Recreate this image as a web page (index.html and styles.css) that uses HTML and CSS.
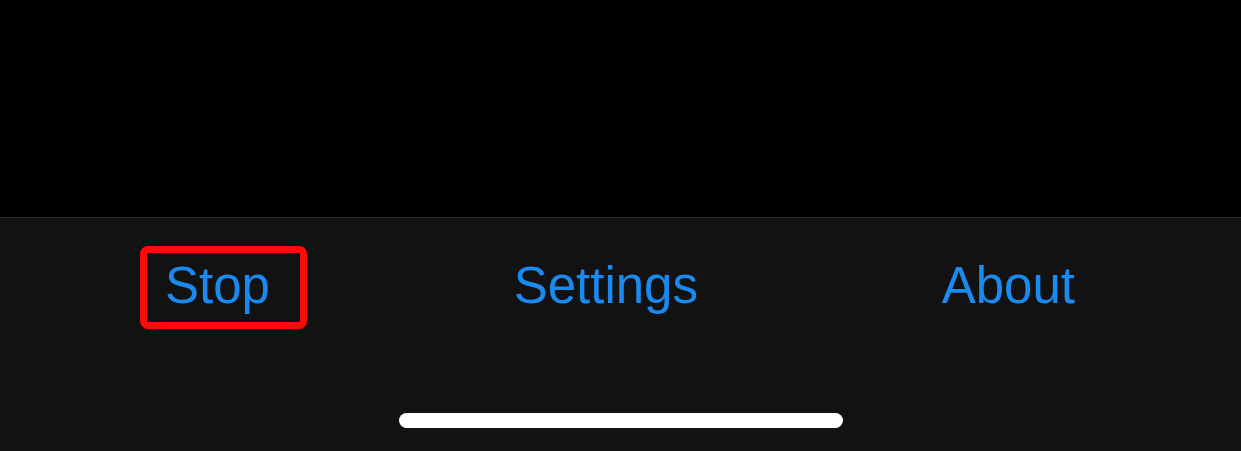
FILE: index.html
```html
<!DOCTYPE html>
<html>
<head>
<meta charset="utf-8">
<link rel="stylesheet" href="styles.css">
</head>
<body>
<div class="screen">
  <div class="content"></div>
  <div class="tabbar">
    <nav class="tabs">
      <span class="tab tab-highlighted">Stop<span class="highlight"></span></span>
      <span class="tab">Settings</span>
      <span class="tab">About</span>
    </nav>
    <div class="home-indicator"></div>
  </div>
</div>
</body>
</html>
```
FILE: styles.css
```css
html, body {
  margin: 0;
  padding: 0;
  background: #121212;
}
.screen {
  width: 1241px;
  height: 451px;
  display: flex;
  flex-direction: column;
  overflow: hidden;
}
.content {
  height: 217px;
  background: #000;
  border-bottom: 1px solid #2a2a2a;
  flex: none;
}
.tabbar {
  flex: 1;
  background: #121212;
  display: flex;
  flex-direction: column;
  align-items: center;
}
.tabs {
  align-self: stretch;
  display: flex;
  justify-content: space-between;
  padding: 38px 166px 0 165px;
}
.tab {
  font-family: "Liberation Sans", Arial, sans-serif;
  font-size: 51px;
  line-height: 59px;
  color: #1a8af0;
}
.tab-highlighted {
  position: relative;
}
.highlight {
  position: absolute;
  left: -25px;
  top: -10px;
  width: 167px;
  height: 83px;
  box-sizing: border-box;
  border: 7px solid #ff0a0a;
  border-radius: 8px;
}
.home-indicator {
  margin-top: 98px;
  width: 444px;
  height: 15px;
  border-radius: 8px;
  background: #fff;
}
```
